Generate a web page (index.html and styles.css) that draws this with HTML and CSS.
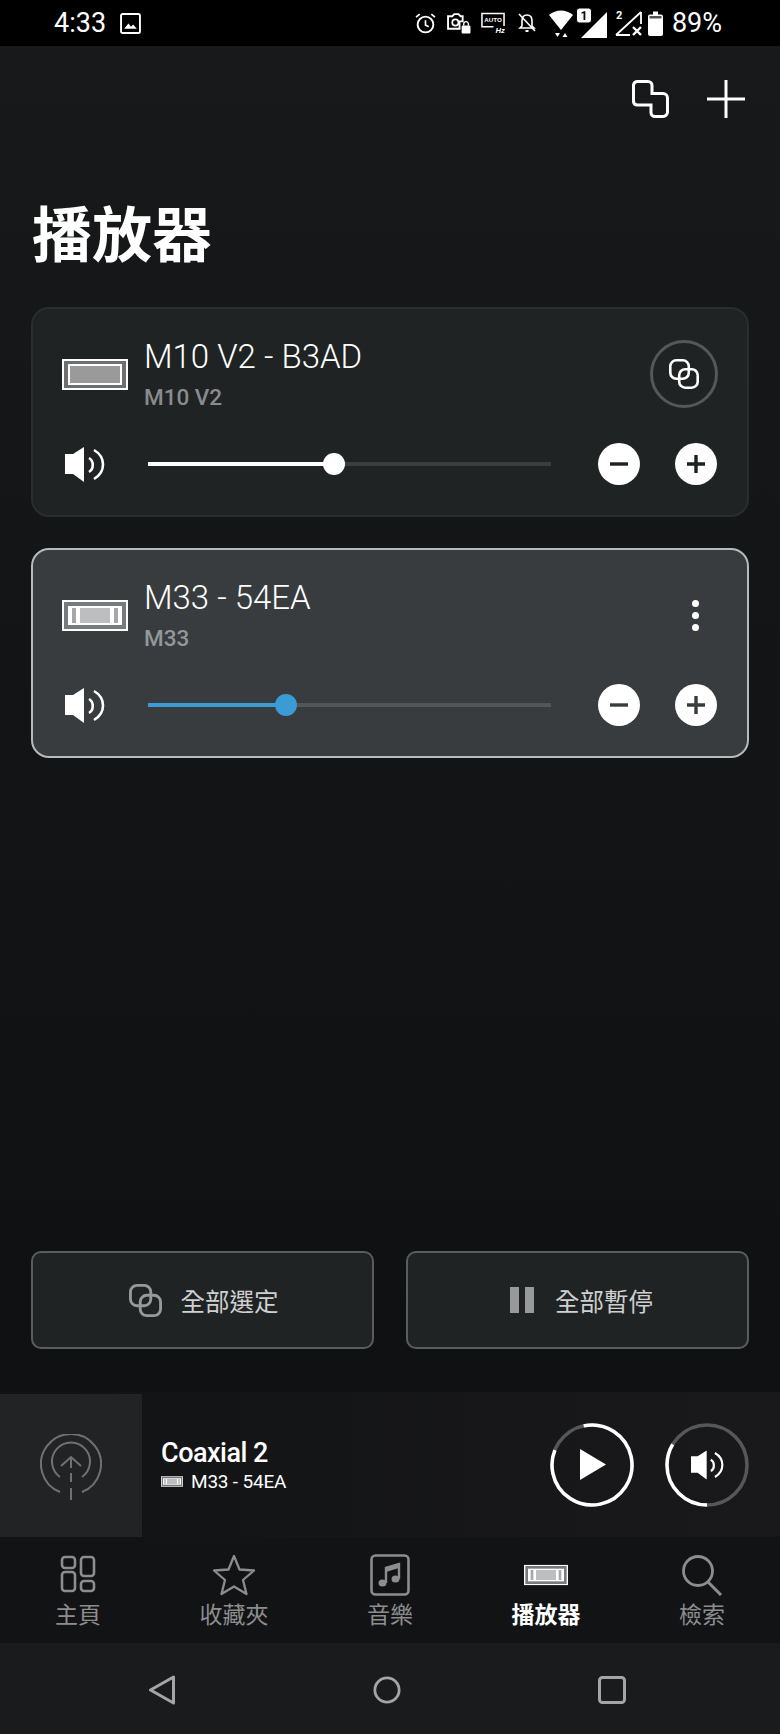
FILE: index.html
```html
<!DOCTYPE html>
<html lang="zh-Hant">
<head>
    <meta charset="UTF-8">
    <meta name="viewport" content="width=device-width, initial-scale=1.0">
    <title>播放器</title>
    <link rel="stylesheet" href="styles.css">
</head>
<body>
    <svg class="defs" aria-hidden="true">
        <symbol id="speaker" viewBox="0 0 40 35">
            <path d="M0 7H8L19 0V35L8 27H0Z" fill="currentColor"/>
            <path d="M24 11C29 14 29 22 24 25M29 3C41 10 41 25 29 32" fill="none" stroke="currentColor" stroke-width="2.6"/>
        </symbol>
        <symbol id="link" viewBox="0 0 30 30">
            <rect x="1.3" y="1.3" width="18.500" height="18.500" rx="6" fill="none" stroke="currentColor" stroke-width="2.6"/>
            <rect x="10.200" y="10.200" width="18.500" height="18.500" rx="6" fill="none" stroke="currentColor" stroke-width="2.6"/>
        </symbol>
        <symbol id="device-m10" viewBox="0 0 66 31">
            <rect width="66" height="31" fill="#fff"/>
            <rect x="2" y="2" width="62" height="27" fill="#6d6f70"/>
            <rect x="6" y="5" width="54" height="21" fill="#fff"/>
            <rect x="8" y="7" width="50" height="17" fill="#9a9a9a"/>
        </symbol>
        <symbol id="device-m33" viewBox="0 0 66 31">
            <rect width="66" height="31" fill="#fff"/>
            <rect x="2" y="2" width="62" height="27" fill="#777b7d"/>
            <rect x="6" y="6" width="54" height="19" fill="#fff"/>
            <rect x="10" y="8" width="4" height="15" fill="#a5a7a8"/>
            <rect x="18" y="8" width="30" height="15" fill="#bcbebf"/>
            <rect x="52" y="8" width="4" height="15" fill="#a5a7a8"/>
        </symbol>
    </svg>

    <div class="page">
        <div class="status-bar">
            <div class="status-left">
                <span class="status-time">4:33</span>
                <svg class="ic-image" viewBox="0 0 20 20"><rect x="1" y="1" width="18" height="18" rx="1.5" fill="none" stroke="#fff" stroke-width="1.8"/><path d="M4 15L8 10L10.500 13L12.500 11L16 15Z" fill="#fff"/></svg>
            </div>
            <div class="status-right">
                <svg class="ic-alarm" viewBox="0 0 20 20"><circle cx="10" cy="11" r="7.500" fill="none" stroke="#fff" stroke-width="1.800"/><path d="M10 7V11.500L13 13M1 4L4.500 1M19 4L15.500 1" fill="none" stroke="#fff" stroke-width="1.600"/></svg>
                <svg class="ic-cam" viewBox="0 0 23 21"><path d="M1 4H5L7 2H11L13 4H15V9H12V16H1Z" fill="none" stroke="#fff" stroke-width="1.800"/><circle cx="8" cy="10" r="3" fill="none" stroke="#fff" stroke-width="1.600"/><rect x="14" y="13" width="8.500" height="7.500" rx="1" fill="#fff"/><path d="M16 13V11.500A2.200 2.200 0 0 1 20.500 11.500V13" fill="none" stroke="#fff" stroke-width="1.300"/></svg>
                <svg class="ic-auto" viewBox="0 0 25 22"><path d="M24 14V1H1V15H13" fill="none" stroke="#fff" stroke-width="1.600"/><text x="3.500" y="10" class="auto-text">AUTO</text><text x="15" y="21" class="hz-text">Hz</text></svg>
                <svg class="ic-bell" viewBox="0 0 20 20"><path d="M10 2C6 2 5 5 5 8V13L3 15H17L15 13V8C15 5 14 2 10 2Z" fill="none" stroke="#fff" stroke-width="1.600"/><path d="M2 1L18 18" stroke="#fff" stroke-width="1.600"/><rect x="8.500" y="17" width="3" height="2" fill="#fff"/></svg>
                <svg class="ic-net" viewBox="0 0 58 30">
                    <path d="M0 7C7 1 17 1 24 7L12 22Z" fill="#fff"/>
                    <path d="M6 25L11 25L8.500 29ZM13.500 29L16 25L18.500 29Z" fill="#fff"/>
                    <path d="M58 4V30H32Z" fill="#fff"/>
                    <rect x="27.500" y="0" width="15" height="15" rx="3" fill="#fff" stroke="#000"/>
                    <text x="35" y="12" class="sim-text">1</text>
                </svg>
                <svg class="ic-sim2" viewBox="0 0 28 27"><text x="1" y="9" class="sim2-text">2</text><path d="M26 2V14M1 25L26 2M1 25H15" fill="none" stroke="#fff" stroke-width="1.800"/><path d="M18 17L26 25M26 17L18 25" stroke="#fff" stroke-width="2.400"/></svg>
                <svg class="ic-batt" viewBox="0 0 15 25"><path d="M5 .5H10V3.500H13A2 2 0 0 1 15 5.500V23A2 2 0 0 1 13 25H2A2 2 0 0 1 0 23V5.500A2 2 0 0 1 2 3.500H5Z" fill="#fff"/><rect x="1.500" y="5" width="12" height="2.500" fill="#555"/></svg>
                <span class="status-batt">89%</span>
            </div>
        </div>

        <div class="top-actions">
            <svg class="ic-merge" viewBox="0 0 37 38"><path d="M5 1.500H16A4 4 0 0 1 20 5.500V13.500H31A4.500 4.500 0 0 1 35.500 18V32A4.500 4.500 0 0 1 31 36.500H23A4 4 0 0 1 19 32.500V25H5A4 4 0 0 1 1.500 21V5A4 4 0 0 1 5 1.500Z" fill="none" stroke="#fff" stroke-width="3"/></svg>
            <svg class="ic-plus" viewBox="0 0 38 38"><path d="M19 0V38M0 19H38" stroke="#fff" stroke-width="3" stroke-linecap="round"/></svg>
        </div>

        <h1 class="page-title">播放器</h1>

        <div class="player-list">
            <div class="player-card">
                <div class="card-top">
                    <svg class="device-icon"><use href="#device-m10"/></svg>
                    <div class="card-text">
                        <div class="card-name">M10 V2 - B3AD</div>
                        <div class="card-model">M10 V2</div>
                    </div>
                    <div class="group-btn"><svg class="group-icon"><use href="#link"/></svg></div>
                </div>
                <div class="volume-row">
                    <svg class="speaker-icon"><use href="#speaker"/></svg>
                    <div class="track">
                        <div class="track-fill" style="width: 186px"></div>
                        <div class="track-thumb" style="left: 186px"></div>
                    </div>
                    <div class="step-btn"><svg viewBox="0 0 20 20"><path d="M1 10H19" stroke="#1d2022" stroke-width="3.400"/></svg></div>
                    <div class="step-btn"><svg viewBox="0 0 20 20"><path d="M1 10H19M10 1V19" stroke="#1d2022" stroke-width="3.400"/></svg></div>
                </div>
            </div>

            <div class="player-card selected">
                <div class="card-top">
                    <svg class="device-icon"><use href="#device-m33"/></svg>
                    <div class="card-text">
                        <div class="card-name">M33 - 54EA</div>
                        <div class="card-model">M33</div>
                    </div>
                    <div class="menu-dots"><span></span><span></span><span></span></div>
                </div>
                <div class="volume-row">
                    <svg class="speaker-icon"><use href="#speaker"/></svg>
                    <div class="track">
                        <div class="track-fill" style="width: 138px"></div>
                        <div class="track-thumb" style="left: 138px"></div>
                    </div>
                    <div class="step-btn"><svg viewBox="0 0 20 20"><path d="M1 10H19" stroke="#383c3e" stroke-width="3.400"/></svg></div>
                    <div class="step-btn"><svg viewBox="0 0 20 20"><path d="M1 10H19M10 1V19" stroke="#383c3e" stroke-width="3.400"/></svg></div>
                </div>
            </div>
        </div>

        <div class="action-row">
            <div class="action-btn">
                <svg class="action-link"><use href="#link"/></svg>
                <span>全部選定</span>
            </div>
            <div class="action-btn">
                <div class="pause-icon"><span></span><span></span></div>
                <span>全部暫停</span>
            </div>
        </div>

        <div class="mini-player">
            <div class="mini-art">
                <svg viewBox="0 0 62 68"><path d="M20 58A30 30 0 1 1 42 58M20 43A19 19 0 1 1 42 43" fill="none" stroke="#6f7172" stroke-width="2"/>
                    <path d="M21 32L31 23L41 32M31 24V34M31 39V48M31 54V66" fill="none" stroke="#6f7172" stroke-width="2"/></svg>
            </div>
            <div class="mini-text">
                <div class="mini-title">Coaxial 2</div>
                <div class="mini-device">
                    <svg class="mini-device-icon"><use href="#device-m33"/></svg>
                    <span>M33 - 54EA</span>
                </div>
            </div>
            <svg class="ring-btn" viewBox="0 0 84 84">
                <circle class="ring-bg" cx="42" cy="42" r="40"/>
                <circle class="ring-on" cx="42" cy="42" r="40" pathLength="100" stroke-dasharray="84.400 100" transform="rotate(-102 42 42)"/>
                <path d="M30 26V57L56 41.500Z" fill="#fff"/>
            </svg>
            <svg class="ring-btn ring-volume" viewBox="0 0 84 84">
                <circle class="ring-bg" cx="42" cy="42" r="40"/>
                <circle class="ring-on" cx="42" cy="42" r="40" pathLength="100" stroke-dasharray="33.600 100" transform="rotate(90 42 42)"/>
                <use href="#speaker" x="26" y="27" width="33" height="30" color="#fff"/>
            </svg>
        </div>

        <nav class="tab-bar">
            <div class="tab">
                <svg class="tab-icon" viewBox="0 0 44 42"><g fill="none" stroke="currentColor" stroke-width="2.600"><rect x="6" y="3" width="13" height="11" rx="3"/><rect x="25" y="3" width="13" height="19" rx="3"/><rect x="6" y="18" width="13" height="19" rx="3"/><rect x="25" y="27" width="13" height="10" rx="3"/></g></svg>
                <span>主頁</span>
            </div>
            <div class="tab">
                <svg class="tab-icon" viewBox="0 0 44 42"><path d="M22 2L27.500 15.500L42 16.500L31 26L34.500 40L22 32.500L9.500 40L13 26L2 16.500L16.500 15.500Z" fill="none" stroke="currentColor" stroke-width="2.300" stroke-linejoin="round"/></svg>
                <span>收藏夾</span>
            </div>
            <div class="tab">
                <svg class="tab-icon" viewBox="0 0 44 42"><rect x="3.500" y="1.500" width="37" height="39" rx="4" fill="none" stroke="currentColor" stroke-width="2.600"/><path d="M18 29V14L31 10V25" fill="none" stroke="currentColor" stroke-width="2.400"/><path d="M18 13L31 9V14L18 18Z" fill="currentColor"/><ellipse cx="14.500" cy="29" rx="4" ry="3.500" fill="currentColor"/><ellipse cx="27.500" cy="25" rx="4" ry="3.500" fill="currentColor"/></svg>
                <span>音樂</span>
            </div>
            <div class="tab active">
                <svg class="tab-icon tab-device" viewBox="0 0 66 31" preserveAspectRatio="xMidYMid meet"><use href="#device-m33"/></svg>
                <span>播放器</span>
            </div>
            <div class="tab">
                <svg class="tab-icon" viewBox="0 0 44 42"><circle cx="18" cy="17" r="14.500" fill="none" stroke="currentColor" stroke-width="2.800"/><path d="M28 28L41 41" stroke="currentColor" stroke-width="3"/></svg>
                <span>檢索</span>
            </div>
        </nav>

        <div class="system-nav">
            <svg class="sys-icon" viewBox="0 0 28 30"><path d="M25.500 2V28L2.500 15Z" fill="none" stroke="#a5a5a5" stroke-width="3" stroke-linejoin="round"/></svg>
            <svg class="sys-icon" viewBox="0 0 30 30"><circle cx="15" cy="15" r="13" fill="none" stroke="#a5a5a5" stroke-width="3"/></svg>
            <svg class="sys-icon" viewBox="0 0 28 28"><rect x="1.500" y="1.500" width="25" height="25" rx="3" fill="none" stroke="#a5a5a5" stroke-width="3"/></svg>
        </div>
    </div>
</body>
</html>
```

FILE: styles.css
```css
* {
    box-sizing: border-box;
}
body {
    margin: 0;
    background-color: #121416;
    font-family: Roboto, "Noto Sans CJK TC", sans-serif;
    color: white;
    overflow: hidden;
}
.defs {
    display: none;
}
.page {
    width: 780px;
    height: 1734px;
    display: flex;
    flex-direction: column;
    background: linear-gradient(#17191a, #101214 60%, #0e0f10);
}

/* status bar */
.status-bar {
    height: 46px;
    background-color: black;
    display: flex;
    justify-content: space-between;
    align-items: center;
    padding: 0 58px 0 54px;
    flex-shrink: 0;
}
.status-left, .status-right {
    display: flex;
    align-items: center;
}
.status-time {
    font-size: 27px;
    line-height: 32px;
}
.status-batt {
    font-size: 27px;
    line-height: 32px;
    margin-left: 9px;
}
.ic-image {
    width: 21px;
    height: 21px;
    margin-left: 14px;
}
.ic-alarm {
    width: 21px;
    height: 21px;
}
.ic-cam {
    width: 24px;
    height: 22px;
    margin-left: 11px;
}
.ic-auto {
    width: 24px;
    height: 22px;
    margin-left: 10px;
}
.ic-bell {
    width: 20px;
    height: 20px;
    margin-left: 12px;
}
.ic-net {
    width: 58px;
    height: 30px;
    margin-left: 12px;
}
.ic-sim2 {
    width: 28px;
    height: 27px;
    margin-left: 8px;
}
.ic-batt {
    width: 15px;
    height: 25px;
    margin-left: 5px;
}
.auto-text {
    font: 700 6.500px "Liberation Sans", sans-serif;
    fill: white;
}
.hz-text {
    font: italic 700 8px "Liberation Sans", sans-serif;
    fill: white;
}
.sim-text {
    font: 700 12px Roboto, sans-serif;
    fill: black;
    text-anchor: middle;
}
.sim2-text {
    font: 700 11px Roboto, sans-serif;
    fill: white;
}

/* header */
.top-actions {
    display: flex;
    justify-content: flex-end;
    align-items: center;
    gap: 38px;
    padding: 34px 35px 0 0;
    flex-shrink: 0;
}
.ic-merge {
    width: 37px;
    height: 38px;
}
.ic-plus {
    width: 38px;
    height: 38px;
}
.page-title {
    margin: 79px 0 0 32px;
    font-size: 60px;
    line-height: 80px;
    font-weight: 700;
}

/* player cards */
.player-list {
    display: flex;
    flex-direction: column;
    gap: 31px;
    margin: 0 31px;
    padding-top: 30px;
    flex: 1;
}
.player-card {
    height: 210px;
    background-color: #202324;
    border: 2px solid #2a2d2f;
    border-radius: 18px;
    padding: 0 29px;
}
.player-card.selected {
    background-color: #383c3e;
    border-color: #b7babb;
}
.card-top {
    height: 130px;
    display: flex;
    align-items: center;
}
.device-icon {
    width: 66px;
    height: 31px;
    flex-shrink: 0;
}
.card-text {
    margin-left: 16px;
    flex: 1;
}
.card-name {
    font-size: 33px;
    line-height: 44px;
    font-weight: 300;
}
.card-model {
    font-size: 22.500px;
    line-height: 32px;
    margin-top: 2px;
    font-weight: 500;
    color: #898c8e;
}
.selected .card-model {
    color: #92989a;
}
.group-btn {
    width: 68px;
    height: 68px;
    border: 3px solid #555758;
    border-radius: 50%;
    display: flex;
    align-items: center;
    justify-content: center;
}
.group-icon {
    width: 30px;
    height: 30px;
}
.menu-dots {
    display: flex;
    flex-direction: column;
    gap: 5px;
    margin-right: 19px;
}
.menu-dots span {
    width: 7px;
    height: 7px;
    border-radius: 50%;
    background-color: white;
}
.volume-row {
    height: 50px;
    display: flex;
    align-items: center;
    padding-left: 3px;
}
.speaker-icon {
    width: 40px;
    height: 35px;
    flex-shrink: 0;
}
.track {
    position: relative;
    width: 403px;
    height: 4px;
    margin: 0 47px 0 43px;
    background-color: #3a3d3f;
    flex-shrink: 0;
}
.selected .track {
    background-color: #50565a;
}
.track-fill {
    height: 100%;
    background-color: white;
}
.track-thumb {
    position: absolute;
    top: -9px;
    width: 22px;
    height: 22px;
    margin-left: -11px;
    border-radius: 50%;
    background-color: white;
}
.selected .track-fill, .selected .track-thumb {
    background-color: #3a9bd5;
}
.step-btn {
    width: 42px;
    height: 42px;
    border-radius: 50%;
    background-color: white;
    display: flex;
    align-items: center;
    justify-content: center;
    margin-right: 35px;
    flex-shrink: 0;
}
.step-btn svg {
    width: 20px;
    height: 20px;
}

/* bottom actions */
.action-row {
    display: flex;
    gap: 32px;
    margin: 0 31px 43px;
    flex-shrink: 0;
}
.action-btn {
    flex: 1;
    height: 98px;
    background-color: #202324;
    border: 2px solid #5a5d5f;
    border-radius: 10px;
    display: flex;
    align-items: center;
    justify-content: center;
    gap: 19px;
    font-size: 24.500px;
    color: #cfd0d0;
}
.action-link {
    width: 33px;
    height: 33px;
    margin-left: 2px;
    color: #98999a;
}
.pause-icon {
    display: flex;
    gap: 6px;
    margin: 0 2px 0 8px;
}
.pause-icon span {
    width: 9px;
    height: 26px;
    background-color: #98999a;
}

/* mini player */
.mini-player {
    height: 145px;
    background: linear-gradient(90deg, #121315, #19191b);
    display: flex;
    align-items: center;
    flex-shrink: 0;
    padding-right: 31px;
}
.mini-art {
    width: 142px;
    height: 143px;
    margin-top: 2px;
    background-color: #212325;
    display: flex;
    align-items: center;
    justify-content: center;
}
.mini-art svg {
    width: 62px;
    height: 68px;
    margin-top: 4px;
}
.mini-text {
    margin-left: 19px;
    flex: 1;
}
.mini-title {
    font-size: 27px;
    line-height: 34px;
    font-weight: 500;
    letter-spacing: -0.5px;
}
.mini-device {
    display: flex;
    align-items: center;
    gap: 8px;
    font-size: 19px;
    line-height: 24px;
    letter-spacing: -0.2px;
}
.mini-device-icon {
    width: 22px;
    height: 11px;
}
.ring-btn {
    width: 84px;
    height: 84px;
    flex-shrink: 0;
}
.ring-volume {
    margin-left: 31px;
}
.ring-bg, .ring-on {
    fill: none;
    stroke-width: 3.500;
}
.ring-bg {
    stroke: #555758;
}
.ring-on {
    stroke: white;
}

/* tab bar */
.tab-bar {
    height: 106px;
    background-color: #121315;
    display: flex;
    flex-shrink: 0;
}
.tab {
    flex: 1;
    display: flex;
    flex-direction: column;
    align-items: center;
    padding-top: 17px;
    color: #8c8d8e;
    font-size: 23px;
    line-height: 30px;
}
.tab.active {
    color: white;
    font-weight: 700;
}
.tab-icon {
    width: 44px;
    height: 42px;
    margin-bottom: 5px;
}
.tab-device {
    padding: 9px 0;
}

/* android nav */
.system-nav {
    height: 91px;
    background-color: #1a1b1d;
    display: flex;
    align-items: center;
    justify-content: space-between;
    padding: 2px 154px 0 148px;
    flex-shrink: 0;
}
.sys-icon {
    width: 28px;
    height: 30px;
}
```
